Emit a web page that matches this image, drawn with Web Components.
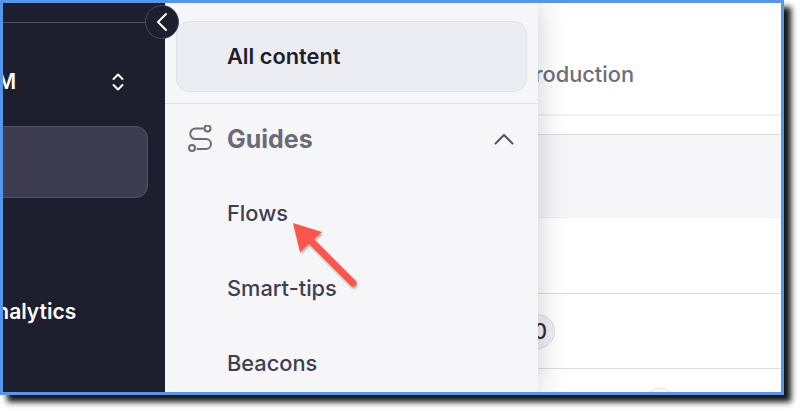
<!DOCTYPE html>
<html>
<head>
<meta charset="utf-8">
<style>
  html, body { margin: 0; background: #fff; }
  body { width: 800px; height: 411px; overflow: hidden; font-family: Inter, "Noto Sans", sans-serif; }
</style>
</head>
<body>
<app-frame>
  <side-nav slot="nav">
    <span slot="team">TEAM</span>
    <span slot="analytics">Analytics</span>
  </side-nav>
  <menu-panel slot="menu">
    <menu-item>Flows</menu-item>
    <menu-item>Smart-tips</menu-item>
    <menu-item>Beacons</menu-item>
  </menu-panel>
  <content-list slot="content"></content-list>
</app-frame>
<script>
class AppFrame extends HTMLElement {
    constructor() {
        super()
        this.attachShadow({ mode: 'open' })
        this.shadowRoot.innerHTML = `
            <style>
                :host {
                    display: flex;
                    position: relative;
                    box-sizing: border-box;
                    width: 784px;
                    height: 395px;
                    border: 3px solid #5596ec;
                    background: #fff;
                    box-shadow: 7px 7px 6px rgba(0, 0, 0, .92);
                }
                .back {
                    position: absolute;
                    left: 142px;
                    top: 2px;
                    width: 34px;
                    height: 34px;
                    box-sizing: border-box;
                    border-radius: 50%;
                    border: 1px solid #4a4a5c;
                    background: #1d1e2e;
                    display: flex;
                    align-items: center;
                    justify-content: center;
                    z-index: 3;
                }
                .arrow {
                    position: absolute;
                    left: 277px;
                    top: 207px;
                    z-index: 4;
                    filter: drop-shadow(1px 2px 1px rgba(0, 0, 0, .3));
                }
            </style>
            <slot name="nav"></slot>
            <slot name="menu"></slot>
            <slot name="content"></slot>
            <div class="back">
                <svg width="14" height="20" viewBox="0 0 14 20" fill="none">
                    <path d="M11 2 L3 10 L11 18" stroke="#fff" stroke-width="2" stroke-linecap="round" stroke-linejoin="round"/>
                </svg>
            </div>
            <svg class="arrow" width="90" height="80" viewBox="277 207 90 80" fill="none">
                <path d="M308 238 L350 280" stroke="#f9574b" stroke-width="7" stroke-linecap="round"/>
                <path d="M290 220 L319 229 L297 249 Z" fill="#f9574b"/>
            </svg>
        `
    }
}

class SideNav extends HTMLElement {
    constructor() {
        super()
        this.attachShadow({ mode: 'open' })
        this.shadowRoot.innerHTML = `
            <style>
                :host {
                    display: flex;
                    flex-direction: column;
                    flex: 0 0 162px;
                    background: #1d1e2e;
                    color: #fff;
                    overflow: hidden;
                    font-weight: 600;
                    font-size: 21px;
                }
                .rule {
                    height: 1px;
                    margin: 19px 15px 0 0;
                    background: #4d4d5d;
                }
                .team {
                    display: flex;
                    align-items: center;
                    height: 25px;
                    margin-top: 46px;
                    padding-right: 40px;
                    justify-content: space-between;
                    white-space: nowrap;
                }
                .team-name { margin-left: -48px; }
                .current {
                    height: 70px;
                    margin: 32px 17px 0 -16px;
                    border: 1px solid #535264;
                    border-radius: 12px;
                    background: #3d3c50;
                }
                .analytics {
                    margin: 102px 0 0 -22px;
                    line-height: 24px;
                    white-space: nowrap;
                }
            </style>
            <div class="rule"></div>
            <div class="team">
                <span class="team-name"><slot name="team"></slot></span>
                <svg width="14" height="20" viewBox="0 0 14 20" fill="none" stroke="#fff" stroke-width="2" stroke-linecap="round" stroke-linejoin="round">
                    <path d="M2.5 7 L7 2.5 L11.5 7"/>
                    <path d="M2.5 13 L7 17.5 L11.5 13"/>
                </svg>
            </div>
            <div class="current"></div>
            <div class="analytics"><slot name="analytics"></slot></div>
        `
    }
}

class MenuPanel extends HTMLElement {
    constructor() {
        super()
        this.attachShadow({ mode: 'open' })
        this.shadowRoot.innerHTML = `
            <style>
                :host {
                    display: flex;
                    flex-direction: column;
                    flex: 0 0 373px;
                    position: relative;
                    z-index: 2;
                    background: #f6f6f9;
                    box-shadow: 0 0 28px rgba(30, 30, 50, .22);
                    clip-path: inset(0 -40px 0 0);
                }
                .all {
                    display: flex;
                    align-items: center;
                    box-sizing: border-box;
                    height: 71px;
                    margin: 18px 11px 0;
                    padding: 0 0 2px 50px;
                    border: 1px solid #e1e2e8;
                    border-radius: 13px;
                    background: #ecedf2;
                    color: #1d1e2e;
                    font-size: 21.8px;
                    font-weight: 600;
                }
                .rule {
                    height: 1px;
                    margin-top: 11px;
                    background: #e1e1e6;
                }
                .head {
                    display: flex;
                    align-items: center;
                    height: 30px;
                    margin-top: 20px;
                    padding: 0 23px 0 22px;
                    color: #6b6b78;
                    font-size: 25px;
                    font-weight: 700;
                }
                .head span { margin-left: 14px; flex: 1; }
                .items {
                    display: flex;
                    flex-direction: column;
                    gap: 45px;
                    margin-top: 44px;
                }
            </style>
            <div class="all">All content</div>
            <div class="rule"></div>
            <div class="head">
                <svg width="26" height="28" viewBox="0 0 26 28" fill="none" stroke="#6b6b78" stroke-width="2" stroke-linecap="round">
                    <path d="M16 3.5 H8.5 a5.3 5.3 0 0 0 0 10.6 H19 a5 5 0 0 1 0 10 H10.5"/>
                    <circle cx="20.5" cy="3.5" r="3"/>
                    <circle cx="5" cy="23" r="3"/>
                </svg>
                <span>Guides</span>
                <svg width="22" height="14" viewBox="0 0 22 14" fill="none" stroke="#55556a" stroke-width="2" stroke-linecap="round" stroke-linejoin="round">
                    <path d="M2.5 11.5 L11 3 L19.5 11.5"/>
                </svg>
            </div>
            <div class="items"><slot></slot></div>
        `
    }
}

class MenuItem extends HTMLElement {
    constructor() {
        super()
        this.attachShadow({ mode: 'open' })
        this.shadowRoot.innerHTML = `
            <style>
                :host {
                    display: block;
                    padding-left: 62px;
                    color: #3e3e52;
                    font-size: 21.8px;
                    font-weight: 500;
                    line-height: 30px;
                }
            </style>
            <slot></slot>
        `
    }
}

class ContentList extends HTMLElement {
    constructor() {
        super()
        this.attachShadow({ mode: 'open' })
        this.shadowRoot.innerHTML = `
            <style>
                :host {
                    display: block;
                    flex: 1;
                    min-width: 0;
                    overflow: hidden;
                    background: #fff;
                }
                .tab {
                    height: 30px;
                    margin: 56px 0 0 -17.5px;
                    color: #6e6e78;
                    font-size: 21.8px;
                    font-weight: 500;
                    line-height: 30px;
                    white-space: nowrap;
                }
                .tabline { height: 2px; margin-top: 25px; background: #f1f1f3; }
                .row { box-sizing: border-box; border-bottom: 1px solid #dcdcdf; position: relative; }
                .head { height: 19px; }
                .hi { height: 83px; background: #f6f6f8; border-bottom-color: #f1f1f3; }
                .r2 { height: 76px; }
                .r3 { height: 75px; display: flex; align-items: center; }
                .r4 { height: 30px; border: 0; }
                .pill {
                    display: inline-flex;
                    align-items: center;
                    justify-content: flex-end;
                    box-sizing: border-box;
                    width: 35px;
                    height: 35px;
                    margin-left: -18px;
                    padding-right: 7px;
                    border: 1px solid #dcdce2;
                    border-radius: 50%;
                    background: #f0f0f3;
                    color: #2a2a3a;
                    font-size: 21px;
                    font-weight: 500;
                }
                .dot {
                    position: absolute;
                    left: 105px;
                    top: 19px;
                    box-sizing: border-box;
                    width: 34px;
                    height: 34px;
                    border: 1px solid #dcdce2;
                    border-radius: 50%;
                }
            </style>
            <div class="tab">Production</div>
            <div class="tabline"></div>
            <div class="row head"></div>
            <div class="row hi"></div>
            <div class="row r2"></div>
            <div class="row r3"><span class="pill">0</span></div>
            <div class="row r4"><span class="dot"></span></div>
        `
    }
}

customElements.define('app-frame', AppFrame)
customElements.define('side-nav', SideNav)
customElements.define('menu-panel', MenuPanel)
customElements.define('menu-item', MenuItem)
customElements.define('content-list', ContentList)
</script>
</body>
</html>
